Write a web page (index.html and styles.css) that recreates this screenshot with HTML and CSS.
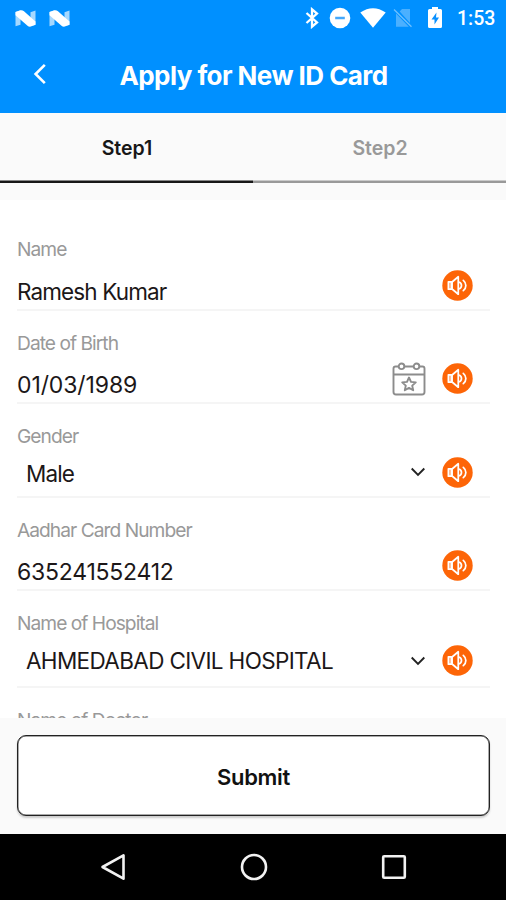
FILE: index.html
```html
<!DOCTYPE html>
<html lang="en">
<head>
<meta charset="utf-8">
<title>Apply for New ID Card</title>
<link rel="stylesheet" href="styles.css">
</head>
<body>
<svg class="defs" aria-hidden="true">
  <symbol id="speaker" viewBox="0 0 32 32">
    <circle cx="16" cy="16" r="15.7" fill="#fd6507"/>
    <g fill="none" stroke="#fff" stroke-width="1.8" stroke-linejoin="round">
      <path fill="#fff" fill-opacity=".4" d="M6.600 12.200h3.200v7.600H6.600z"/>
      <path d="M10.400 12.400 16.800 7v18l-6.400-5.400z"/>
      <path d="M17.200 12.400c3.900.9 3.900 6.300 0 7.200M22 10.700c3.500 2.900 3.500 7.700 0 10.600" stroke-linecap="round"/>
    </g>
  </symbol>
  <symbol id="nougat" viewBox="0 0 21 17">
    <path d="M.5 2 5.500.2v14.500L.5 16.300zM15.500 2.200l5-1.700v14.300l-5 1.700z" fill="#a5d8ff"/>
    <path d="M.5 2 5.500.3Q7.500 0 9 1.300L20.500 11.500v3.200l-5 1.900Q14 17 12.500 15.700L.5 5.200z" fill="#fff"/>
  </symbol>
  <symbol id="chevron" viewBox="0 0 16 10">
    <path d="m1.700 1.500 6.300 6.300 6.300-6.300" fill="none" stroke="#222" stroke-width="1.900"/>
  </symbol>
</svg>
<div class="screen">
  <header class="top">
    <div class="status">
      <svg class="nougat" width="21" height="17"><use href="#nougat"/></svg>
      <svg class="nougat second" width="21" height="17"><use href="#nougat"/></svg>
      <div class="status-right">
        <svg class="bt" width="14" height="22" viewBox="0 0 14 22"><path d="M1.500 6 12 15.500 7 19.700V2.300l5 4.200L1.500 16" fill="none" stroke="#fff" stroke-width="2.300"/></svg>
        <svg class="dnd" width="22" height="22" viewBox="0 0 22 22"><circle cx="11" cy="11" r="10.300" fill="#fff"/><path d="M6.200 11h9.600" stroke="#45a8fb" stroke-width="2.500"/></svg>
        <svg class="wifi" width="26" height="20" viewBox="0 0 26 20"><path d="M.3 4.500Q13-4.200 25.700 4.500L13 19.800z" fill="#fff"/></svg>
        <svg class="sim" width="20" height="20" viewBox="0 0 20 20"><path d="M9 1h8v14L6.700 3.400zM3 5.500 15.800 18.800H3z" fill="#4bb0ff"/><path d="m1 1.500 17.500 17.300" stroke="#6fc0ff" stroke-width="1.300"/></svg>
        <svg class="battery" width="14" height="22" viewBox="0 0 14 22"><path d="M4 0h6v2h2.500Q14 2 14 3.500v16q0 1.500-1.500 1.500h-11Q0 21 0 19.500v-16Q0 2 1.500 2H4z" fill="#fff"/><path d="M8.500 5.500 3.500 12.500H6.500V17.500L11 10.500H8z" fill="#0890ff"/></svg>
        <span class="clock">1:53</span>
      </div>
    </div>
    <div class="appbar">
      <svg class="back" width="14" height="22" viewBox="0 0 14 22"><path d="M11.800 1.800 2.600 11l9.200 9.200" fill="none" stroke="#fff" stroke-width="2.600"/></svg>
      <h1 class="title">Apply for New ID Card</h1>
    </div>
  </header>
  <nav class="tabs">
    <div class="tab active">Step1</div>
    <div class="tab">Step2</div>
  </nav>
  <main class="form">
    <div class="field f94">
      <div class="label">Name</div>
      <div class="row"><div class="value v-name">Ramesh Kumar</div><svg class="speaker"><use href="#speaker"/></svg></div>
    </div>
    <div class="field f93">
      <div class="label">Date of Birth</div>
      <div class="row"><div class="value v-dob">01/03/1989</div>
        <svg class="calendar" width="34" height="34" viewBox="0 0 34 34"><g fill="none" stroke="#8c8c8c" stroke-width="1.900" stroke-linejoin="round"><path d="M7 4.500H3.500Q1.500 4.500 1.500 6.500V30q0 2.500 2.500 2.500h26q2.500 0 2.500-2.500V6.500q0-2-2-2H27M12 4.500h10M1.500 12.500h31"/><circle cx="9.500" cy="4.300" r="2.800"/><circle cx="24.500" cy="4.300" r="2.800"/><path d="m17 15.500 2 4.400 4.800.5-3.600 3.200 1 4.700-4.200-2.400-4.200 2.400 1-4.700-3.600-3.200 4.800-.5z"/></g></svg>
        <svg class="speaker"><use href="#speaker"/></svg></div>
    </div>
    <div class="field f94">
      <div class="label">Gender</div>
      <div class="row"><div class="value select v-gender">Male</div><svg class="chevron"><use href="#chevron"/></svg><svg class="speaker"><use href="#speaker"/></svg></div>
    </div>
    <div class="field f93">
      <div class="label">Aadhar Card Number</div>
      <div class="row"><div class="value v-card">635241552412</div><svg class="speaker"><use href="#speaker"/></svg></div>
    </div>
    <div class="field f97">
      <div class="label">Name of Hospital</div>
      <div class="row"><div class="value select v-hosp">AHMEDABAD CIVIL HOSPITAL</div><svg class="chevron"><use href="#chevron"/></svg><svg class="speaker"><use href="#speaker"/></svg></div>
    </div>
    <div class="field last">
      <div class="label">Name of Doctor</div>
    </div>
  </main>
  <div class="action"><button class="submit">Submit</button></div>
  <footer class="navbar">
    <svg width="26" height="30" viewBox="0 0 26 30"><path d="M23.500 3.300v23.400L2.500 15z" fill="none" stroke="#f2f2f2" stroke-width="2.600" stroke-linejoin="round"/></svg>
    <svg width="28" height="28" viewBox="0 0 28 28"><circle cx="14" cy="14" r="12" fill="none" stroke="#f2f2f2" stroke-width="2.600"/></svg>
    <svg width="26" height="26" viewBox="0 0 26 26"><rect x="2.200" y="2.200" width="21.600" height="21.600" rx="1" fill="none" stroke="#f2f2f2" stroke-width="2.600"/></svg>
  </footer>
</div>
</body>
</html>
```
FILE: styles.css
```css
* { box-sizing: border-box; }
body { margin: 0; font-family: Inter, sans-serif; background: #fff; }
svg { display: block; flex: none; }
.defs { display: none; }
.screen { width: 506px; height: 900px; display: flex; flex-direction: column; overflow: hidden; }
.top { height: 113px; background: #0090ff; color: #fff; flex: none; }
.status { height: 36px; display: flex; align-items: center; padding: 0 11px 0 15px; }
.second { margin-left: 13px; }
.status-right { margin-left: auto; display: flex; align-items: center; }
.dnd { margin-left: 10px; }
.wifi { margin-left: 9px; }
.sim { margin-left: 7px; }
.battery { margin-left: 15px; }
.clock { font: 500 19.500px/24px Roboto, sans-serif; margin-left: 15px; width: 38px; padding-top: 1px; white-space: nowrap; }
.appbar { height: 77px; display: flex; align-items: center; padding: 0 33px; }
.back { margin-top: -2px; }
.title { flex: 1; margin: 2px 13px 0 0; text-align: center; font-size: 26px; font-weight: 700; letter-spacing: -0.56px; line-height: 32px; white-space: nowrap; }
.tabs { height: 87px; flex: none; display: flex; background: #fafafa; padding-bottom: 17px; }
.tab { flex: 1; text-align: center; font-size: 19.500px; font-weight: 600; line-height: 70px; color: #999; box-shadow: inset 0 -2.500px #999; padding-left: 1px; }
.active { color: #171717; box-shadow: inset 0 -2.500px #171717; }
.form { height: 518px; flex: none; padding: 17px 16px 0 17px; overflow: hidden; background: #fff; }
.field { display: flex; flex-direction: column; padding-top: 20px; border-bottom: 2px solid #f5f5f5; }
.f94 { height: 94px; }
.f93 { height: 93px; }
.f97 { height: 97px; }
.last { border: 0; }
.label { height: 24px; line-height: 25px; font-size: 19.200px; letter-spacing: -0.97px; color: #999; white-space: nowrap; }
.row { flex: 1; display: flex; align-items: center; padding-right: 17px; }
.value { flex: 1; font-size: 22.500px; line-height: 28px; color: #1c1718; padding-top: 13px; white-space: nowrap; }
.select { padding: 3px 0 0 9px; }
.v-name { letter-spacing: -0.87px; }
.v-dob { font-size: 23px; letter-spacing: -0.1px; padding-top: 12px; }
.v-gender { letter-spacing: -0.9px; }
.v-card { font-size: 23px; letter-spacing: -0.22px; padding-top: 12px; }
.v-hosp { padding-top: 0; letter-spacing: -0.65px; }
.speaker { width: 31px; height: 31px; }
.chevron { width: 16px; height: 10px; margin-right: 16px; }
.calendar { margin-right: 16px; }
.action { height: 116px; flex: none; background: #fafafa; padding: 17px 16px 0 17px; }
.submit { display: block; width: 100%; height: 81px; border: 1.500px solid #222; border-radius: 9px; background: #fff; color: #111; font: 600 22px Inter, sans-serif; letter-spacing: -0.3px; box-shadow: 0 2px 2px #ccc, inset 0 0 0 .5px #555; padding: 2px 0 0; }
.navbar { flex: 1; background: #000; display: flex; align-items: center; justify-content: space-between; padding: 0 99px 0 100px; }
```
